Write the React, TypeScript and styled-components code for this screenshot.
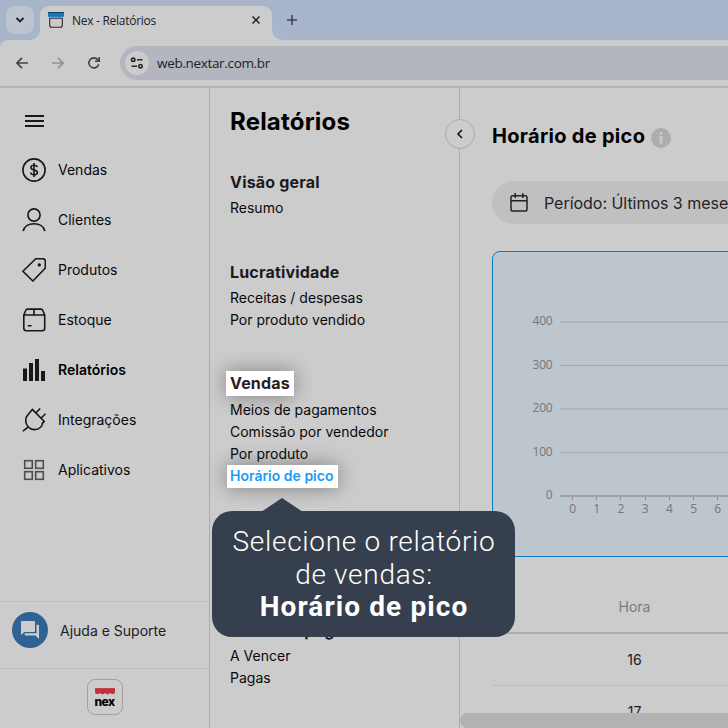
import React from "react";
import styled, { createGlobalStyle, css } from "styled-components";

const menuList = [
  { name: "Vendas", icon: "sales" },
  { name: "Clientes", icon: "clients" },
  { name: "Produtos", icon: "products" },
  { name: "Estoque", icon: "stock" },
  { name: "Relatórios", icon: "reports", active: true },
  { name: "Integrações", icon: "plug" },
  { name: "Aplicativos", icon: "apps" },
];

const hours = [0, 1, 2, 3, 4, 5, 6];
const gridLines = [
  { label: "400", y: 70, thick: true },
  { label: "300", y: 114, thick: false },
  { label: "200", y: 157, thick: true },
  { label: "100", y: 201, thick: false },
];

const MenuIcon = ({ type }: { type: string }) => {
  switch (type) {
    case "sales":
      return (
        <LineIcon viewBox="0 0 24 24">
          <circle cx="12" cy="12" r="11.1" />
          <path d="M15.2 9.2C15 7.9 13.8 7.3 12 7.3c-1.9 0-3.1.8-3.1 2.2 0 3.4 6.5 1.5 6.5 5 0 1.4-1.3 2.3-3.3 2.3-2 0-3.3-.8-3.5-2.3M12 5v14" />
        </LineIcon>
      );
    case "clients":
      return (
        <LineIcon viewBox="0 0 24 24">
          <circle cx="12" cy="7" r="6.1" />
          <path d="M1.2 23.2C2 18.5 6.5 15.7 12 15.7s10 2.8 10.8 7.5" />
        </LineIcon>
      );
    case "products":
      return (
        <LineIcon viewBox="0 0 24 24">
          <path d="M.9 13.2 13.2 1.2c.4-.4.8-.5 1.300-.5h6.300c1.500 0 2.500 1 2.500 2.500v6.200c0 .6-.2 1-.6 1.400L10.900 23z" />
          <circle cx="17.3" cy="6.9" r=".9" fill="#17181c" />
        </LineIcon>
      );
    case "stock":
      return (
        <LineIcon viewBox="0 0 24 24">
          <path d="M1.800 7v13.200c0 1.500 1 2.500 2.500 2.500h15.900c1.500 0 2.500-1 2.500-2.500V7l-1.900-4.500c-.3-.9-.9-1.400-1.800-1.400H5.500c-.9 0-1.500.5-1.800 1.400zM1.800 7h20.900M12 1v6M5.800 17.800h3.800" />
        </LineIcon>
      );
    case "reports":
      return (
        <LineIcon viewBox="0 0 24 24">
          <path
            d="M1 10.500h4V23H1zM7 5h4v18H7zM13 1h4v22h-4zM19 13h4v10h-4z"
            fill="#17181c"
            stroke="none"
          />
        </LineIcon>
      );
    case "plug":
      return (
        <LineIcon viewBox="0 0 24 24">
          <path d="M10.300 1.400 22.300 13.400l-2 1.900c.4 1.200-.6 2.800-1.700 3.900-3.400 3.300-8.800 3.200-12.200-.1-3.500-3.600-3.600-9.200-.2-12.700zM.9 23.200l5.700-4.600M13.200 5.500l5-5M18.500 10.700l5-5" />
        </LineIcon>
      );
    default:
      return (
        <LineIcon viewBox="0 0 24 24">
          <g stroke="#4c4d52">
            <rect x="2.7" y="2.7" width="7.6" height="7.6" />
            <rect x="13.7" y="2.7" width="7.6" height="7.6" />
            <rect x="2.7" y="13.7" width="7.6" height="7.6" />
            <rect x="13.7" y="13.7" width="7.6" height="7.6" />
          </g>
        </LineIcon>
      );
  }
};

const Browser = () => {
  return (
    <>
      <TabStrip>
        <TabSearch>
          <svg width="10" height="10" viewBox="0 0 10 10">
            <path d="m1.500 3 3.500 3.500L8.500 3" fill="none" stroke="#202124" strokeWidth="1.800" />
          </svg>
        </TabSearch>
        <Tab>
          <svg width="16" height="16" viewBox="0 0 16 16">
            <path d="M1.700 6.200v7c0 1.200.8 2 2 2h8.600c1.200 0 2-.8 2-2v-7z" fill="#cccac9" stroke="#37282c" strokeWidth="1.100" />
            <path d="M0 0h16v4c-.8 1.600-2.200 1.700-3.200.4-.9 1.400-2.300 1.400-3.200 0-.9 1.400-2.300 1.400-3.200 0-.9 1.400-2.300 1.400-3.200 0C2.200 5.700.8 5.600 0 4z" fill="#0879c7" />
            <path d="M0 .5h16" stroke="#24384d" />
          </svg>
          <TabTitle>Nex - Relatórios</TabTitle>
          <svg width="8" height="8" viewBox="0 0 8 8">
            <path d="m.5.500 7 7m0-7-7 7" stroke="#202124" strokeWidth="1.500" />
          </svg>
        </Tab>
        <NewTab viewBox="0 0 10 10">
          <path d="M5 0v10M0 5h10" stroke="#3b4351" strokeWidth="1.500" />
        </NewTab>
      </TabStrip>
      <Toolbar>
        <NavIcon viewBox="0 0 12 12">
          <path d="M12 6H1.200M6 .9.900 6 6 11.100" />
        </NavIcon>
        <NavIcon viewBox="0 0 12 12" $muted>
          <path d="M0 6h10.800M6 .9 11.100 6 6 11.100" />
        </NavIcon>
        <NavIcon viewBox="0 0 12 12">
          <path d="M10.700 7.200A5 5 0 1 1 9.800 2.800l1.200 1.300M11.200 0v4.300H7" />
        </NavIcon>
        <AddressBar>
          <SiteInfo>
            <svg width="14" height="12" viewBox="0 0 14 12">
              <g fill="none" stroke="#27282c" strokeWidth="1.600">
                <circle cx="3.200" cy="2.800" r="1.700" />
                <circle cx="10.500" cy="9.200" r="1.700" />
                <path d="M7 2.800h5.500M1.500 9.200H7" />
              </g>
            </svg>
          </SiteInfo>
          <Url>web.nextar.com.br</Url>
        </AddressBar>
      </Toolbar>
    </>
  );
};

const Chart = () => {
  return (
    <ChartSvg viewBox="0 0 236 304">
      {gridLines.map((line) => (
        <g key={line.label}>
          <rect
            x="67"
            y={line.y - 1}
            width="170"
            height={line.thick ? 2 : 1}
            fill={line.thick ? "#b2b5bf" : "#a7a9ad"}
          />
          <text x="59.5" y={line.y + 3} textAnchor="end">
            {line.label}
          </text>
        </g>
      ))}
      <rect x="67" y="243" width="170" height="2" fill="#9fa2a6" />
      <text x="59.5" y="247" textAnchor="end">0</text>
      {hours.map((hour) => (
        <g key={hour}>
          <rect x={79 + Math.round(hour * 24.2)} y="245" width="1" height="3" fill="#898c91" />
          <text x={79.5 + hour * 24.2} y="261" textAnchor="middle">
            {hour}
          </text>
        </g>
      ))}
    </ChartSvg>
  );
};

const App = () => {
  return (
    <Wrapper>
      <GlobalStyle />
      <Browser />
      <Page>
        <Sidebar>
          <Hamburger>
            <span />
            <span />
            <span />
          </Hamburger>
          <MenuList>
            {menuList.map((menu) => (
              <MenuItem key={menu.name} $active={menu.active}>
                <MenuIcon type={menu.icon} />
                <span>{menu.name}</span>
              </MenuItem>
            ))}
          </MenuList>
          <Help>
            <HelpIcon>
              <svg width="18" height="18" viewBox="0 0 18 18" fill="#cccccc">
                <path d="M1 0h12c.6 0 1 .4 1 1v9c0 .6-.4 1-1 1H3.500L0 14V1c0-.6.4-1 1-1z" />
                <path d="M15.500 3.700H17c.6 0 1 .4 1 1V18l-3.500-3.500H4.700c-.6 0-1-.4-1-1v-1.300h11.800z" />
              </svg>
            </HelpIcon>
            <span>Ajuda e Suporte</span>
          </Help>
          <LogoArea>
            <Logo>
              <svg width="20" height="7" viewBox="0 0 20 7">
                <path d="M0 0h20v4.500c-1 2-3.500 2-4.900.4-1.400 1.800-3.600 1.800-5.100 0-1.500 1.800-3.700 1.800-5.100 0C3.500 6.500 1 6.500 0 4.500z" fill="#cc2b3c" />
                <path d="M0 .5h20" stroke="#b64a48" />
              </svg>
              nex
            </Logo>
          </LogoArea>
        </Sidebar>

        <Reports>
          <ReportsTitle>Relatórios</ReportsTitle>
          <Collapse>
            <svg width="8" height="10" viewBox="0 0 8 10">
              <path d="M6 1 2 5l4 4" fill="none" stroke="#111" strokeWidth="1.600" />
            </svg>
          </Collapse>
          <Section $top={28}>
            <SectionTitle>Visão geral</SectionTitle>
            <ReportLink>Resumo</ReportLink>
          </Section>
          <Section $top={38}>
            <SectionTitle>Lucratividade</SectionTitle>
            <ReportLink>Receitas / despesas</ReportLink>
            <ReportLink>Por produto vendido</ReportLink>
          </Section>
          <Section $top={38}>
            <SectionTitle>
              <TitleSpot>Vendas</TitleSpot>
            </SectionTitle>
            <ReportLink>Meios de pagamentos</ReportLink>
            <ReportLink>Comissão por vendedor</ReportLink>
            <ReportLink>Por produto</ReportLink>
            <ReportLink>
              <LinkSpot>Horário de pico</LinkSpot>
            </ReportLink>
          </Section>
          <Section $top={128}>
            <SectionTitle>Contas a pagar</SectionTitle>
            <ReportLink>A Vencer</ReportLink>
            <ReportLink>Pagas</ReportLink>
          </Section>
          {/* dica */}
          <Tip>
            <span>Selecione o relatório</span>
            <span>de vendas:</span>
            <strong>Horário de pico</strong>
          </Tip>
        </Reports>

        <Content>
          <ContentTitle>
            <h2>Horário de pico</h2>
            <Info>
              <svg width="4" height="12" viewBox="0 0 4 12" fill="#cccccc">
                <rect x=".7" y="0" width="2.600" height="2.400" />
                <rect x=".7" y="4" width="2.600" height="7.500" />
              </svg>
            </Info>
          </ContentTitle>
          <Period>
            <svg width="18" height="19" viewBox="0 0 18 19" fill="none" stroke="#222327" strokeWidth="1.500">
              <rect x="1" y="2.800" width="16" height="15.200" rx="1.800" />
              <path d="M1 7.800h16M5.200 0v5M12.800 0v5" />
            </svg>
            <span>Período: Últimos 3 meses</span>
          </Period>
          <ChartCard>
            <Chart />
          </ChartCard>
          <Table>
            <HeadRow>
              <Cell>Hora</Cell>
            </HeadRow>
            <Row>
              <Cell>16</Cell>
            </Row>
            <Row>
              <Cell>17</Cell>
            </Row>
          </Table>
          <ScrollBar />
        </Content>
      </Page>
    </Wrapper>
  );
};

const GlobalStyle = createGlobalStyle`
  * {
    box-sizing: border-box;
  }
  body {
    margin: 0;
    overflow: hidden;
    background-color: #cccccc;
  }
  svg {
    display: block;
    flex-shrink: 0;
  }
`;

const Wrapper = styled.div`
  display: flex;
  flex-direction: column;
  width: 728px;
  height: 728px;
  overflow: hidden;
  background-color: #cccccc;
  font-family: Inter, "Liberation Sans", sans-serif;
  font-size: 14px;
  color: #08090d;
`;

const TabStrip = styled.div`
  display: flex;
  height: 48px;
  margin-bottom: -8px;
  padding: 6px 6px 0;
  background-color: #a8b5ca;
`;

const TabSearch = styled.div`
  display: flex;
  align-items: center;
  justify-content: center;
  width: 28px;
  height: 28px;
  border-radius: 9px;
  background-color: #bcc4d0;
`;

const Tab = styled.div`
  position: relative;
  display: flex;
  align-items: center;
  width: 232px;
  height: 34px;
  margin-left: 6px;
  padding: 0 12px 6px 8px;
  border-radius: 9px 9px 0 0;
  background-color: #cccccc;

  /* curvas na base da aba */
  &::before,
  &::after {
    content: "";
    position: absolute;
    bottom: 0;
    width: 10px;
    height: 10px;
  }
  &::before {
    left: -10px;
    background: radial-gradient(circle at 0 0, transparent 9.5px, #cccccc 10px);
  }
  &::after {
    right: -10px;
    background: radial-gradient(circle at 100% 0, transparent 9.5px, #cccccc 10px);
  }
`;

const TabTitle = styled.div`
  flex: 1;
  margin-left: 8px;
  font-family: "Open Sans", "Noto Sans", sans-serif;
  font-size: 12px;
  letter-spacing: -0.28px;
  color: #202124;
`;

const NewTab = styled.svg`
  width: 10px;
  height: 10px;
  margin: 9px 0 0 15px;
`;

const Toolbar = styled.div`
  position: relative;
  display: flex;
  align-items: center;
  height: 48px;
  padding: 0 0 0 16px;
  border-bottom: 2px solid #aeb6bb;
  border-radius: 8px 0 0 0;
  background-color: #cccccc;
`;

const NavIcon = styled.svg<{ $muted?: boolean }>`
  width: 12px;
  height: 12px;
  margin-right: 24px;
  overflow: visible;
  fill: none;
  stroke: ${(props) => (props.$muted ? "#8d9095" : "#3c434d")};
  stroke-width: 1.6;
`;

const AddressBar = styled.div`
  display: flex;
  align-items: center;
  flex: 1;
  height: 34px;
  margin-left: -4px;
  padding-left: 5px;
  border-radius: 17px 0 0 17px;
  background-color: #b3b6be;
`;

const SiteInfo = styled.div`
  display: flex;
  align-items: center;
  justify-content: center;
  width: 24px;
  height: 24px;
  border-radius: 50%;
  background-color: #cccccc;
`;

const Url = styled.div`
  margin-left: 8px;
  font-family: "Open Sans", "Noto Sans", sans-serif;
  font-size: 13.5px;
  letter-spacing: -0.33px;
  color: #1e2024;
`;

const Page = styled.div`
  display: flex;
  flex: 1;
  min-height: 0;
`;

const Sidebar = styled.nav`
  display: flex;
  flex-direction: column;
  width: 210px;
  border-right: 1px solid #acacac;
`;

const Hamburger = styled.div`
  display: flex;
  flex-direction: column;
  gap: 3px;
  padding: 27px 0 0 25px;

  span {
    width: 19px;
    height: 2px;
    background-color: #171a19;
  }
`;

const MenuList = styled.div`
  flex: 1;
  padding: 18px 0 0 22px;
`;

const MenuItem = styled.div<{ $active?: boolean }>`
  display: flex;
  align-items: center;
  gap: 12px;
  height: 50px;

  span {
    padding-bottom: 2px;
  }
  ${(props) =>
    props.$active &&
    css`
      font-weight: 600;
      color: #000;
    `}
`;

const LineIcon = styled.svg`
  width: 24px;
  height: 24px;
  fill: none;
  stroke: #17181c;
  stroke-width: 1.6;
`;

const Help = styled.div`
  display: flex;
  align-items: center;
  gap: 12px;
  height: 67px;
  padding: 0 0 10px 12px;
  border-top: 1px solid #bdbdbd;
  color: #202125;
`;

const HelpIcon = styled.div`
  display: flex;
  align-items: center;
  justify-content: center;
  width: 36px;
  height: 36px;
  border-radius: 50%;
  background-color: #306193;
`;

const LogoArea = styled.div`
  display: flex;
  justify-content: center;
  height: 60px;
  padding-top: 10px;
  border-top: 1px solid #bdbdbd;
`;

const Logo = styled.div`
  display: flex;
  flex-direction: column;
  align-items: center;
  width: 36px;
  height: 36px;
  padding-top: 8px;
  border: 1px solid #a0a0a0;
  border-radius: 8px;
  font-size: 12px;
  font-weight: 800;
  line-height: 13px;
  letter-spacing: -0.5px;
  color: #000;
`;

const Reports = styled.aside`
  position: relative;
  width: 250px;
  padding: 17px 0 0 20px;
  border-right: 1px solid #acacac;
`;

const ReportsTitle = styled.h1`
  margin: 0;
  font-size: 24px;
  font-weight: 700;
  line-height: 34px;
  letter-spacing: 0.2px;
  color: #000;
`;

const Collapse = styled.div`
  position: absolute;
  top: 31px;
  right: -16px;
  z-index: 2;
  display: flex;
  align-items: center;
  justify-content: center;
  width: 30px;
  height: 30px;
  border: 1px solid #acacac;
  border-radius: 50%;
  background-color: #cccccc;
`;

const Section = styled.section<{ $top: number }>`
  margin-top: ${(props) => props.$top}px;
`;

const SectionTitle = styled.h3`
  height: 30px;
  margin: 0;
  font-size: 16px;
  font-weight: 700;
  line-height: 30px;
  letter-spacing: 0.18px;
  color: #1b1b1f;
`;

const ReportLink = styled.div`
  display: flex;
  align-items: flex-start;
  height: 22px;
  line-height: 21px;
`;

const spot = css`
  background-color: #ffffff;
  box-shadow: 0 0 20px rgba(0, 0, 0, 0.38);
`;

const TitleSpot = styled.span`
  ${spot}
  display: block;
  width: 68px;
  height: 25px;
  margin-left: -4px;
  padding-left: 4px;
  line-height: 25px;
  transform: translateY(2px);
  color: #2b2020;
`;

const LinkSpot = styled.span`
  ${spot}
  width: 111px;
  height: 23px;
  margin-left: -3px;
  padding-left: 3px;
  font-weight: 600;
  color: #1a9bf5;
`;

const Tip = styled.div`
  position: absolute;
  top: 423px;
  left: 2px;
  z-index: 3;
  display: flex;
  flex-direction: column;
  align-items: center;
  width: 303px;
  height: 126px;
  padding: 15px 0 0 1px;
  border-radius: 20px;
  background-color: #363f4e;
  font-family: Roboto, sans-serif;
  font-size: 28px;
  font-weight: 300;
  line-height: 32.5px;
  letter-spacing: 0.7px;
  white-space: nowrap;
  color: #ffffff;

  strong {
    font-weight: 700;
    letter-spacing: 1.1px;
  }

  &::before {
    content: "";
    position: absolute;
    top: -13px;
    left: 49px;
    border: solid transparent;
    border-width: 0 21px 14px;
    border-bottom-color: #363f4e;
  }
`;

const Content = styled.main`
  position: relative;
  flex: 1;
  min-width: 0;
  padding: 32px 0 0 32px;
  overflow: hidden;
`;

const ContentTitle = styled.div`
  display: flex;
  align-items: center;
  height: 32px;

  h2 {
    width: 159px;
    margin: 0;
    font-size: 20px;
    font-weight: 700;
    letter-spacing: 0.3px;
    white-space: nowrap;
    color: #000;
  }
`;

const Info = styled.div`
  display: flex;
  align-items: center;
  justify-content: center;
  width: 20px;
  height: 20px;
  margin-top: 4px;
  border-radius: 50%;
  background-color: #adadad;
`;

const Period = styled.div`
  display: flex;
  align-items: center;
  gap: 16px;
  height: 43px;
  margin-top: 29px;
  padding-left: 18px;
  border-radius: 22px 0 0 22px;
  background-color: #c0c0c0;
  font-size: 16px;
  letter-spacing: -0.03px;
  white-space: nowrap;
  color: #222327;
`;

const ChartCard = styled.div`
  width: 400px;
  height: 306px;
  margin-top: 27px;
  border: 1px solid #087bc3;
  border-radius: 8px;
  background-color: #bdc5cd;
`;

const ChartSvg = styled.svg`
  width: 236px;
  height: 304px;

  text {
    font-family: "Open Sans", "Noto Sans", sans-serif;
    font-size: 12px;
    letter-spacing: -0.2px;
    fill: #74777b;
  }
`;

const Table = styled.div`
  width: 285px;
  margin-top: 25px;
`;

const HeadRow = styled.div`
  display: flex;
  height: 52px;
  padding-bottom: 2px;
  border-bottom: 2px solid #acacac;
  color: #777d7d;
`;

const Row = styled.div`
  display: flex;
  height: 52px;
  border-bottom: 1px solid #bdbdbd;
  color: #1c1d22;
`;

const Cell = styled.div`
  display: flex;
  align-items: center;
  justify-content: center;
  flex: 1;
`;

const ScrollBar = styled.div`
  position: absolute;
  right: -20px;
  bottom: 0;
  left: 0;
  height: 15px;
  border-radius: 8px;
  background-color: #b2b2b2;
`;

export default App;
